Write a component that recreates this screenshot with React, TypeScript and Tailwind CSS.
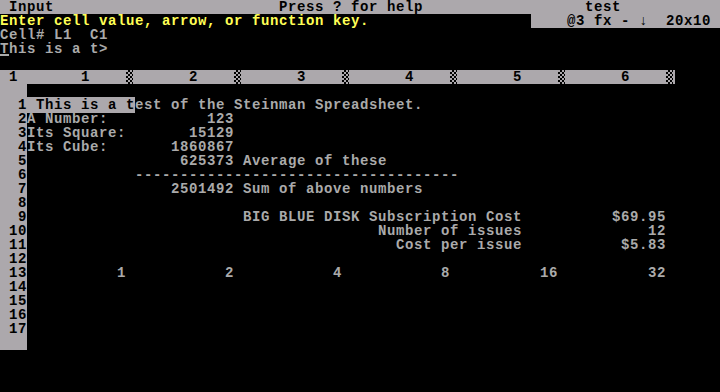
import React from 'react';

const GRAY = 'bg-[#aca8ac]';

// build a text-mode line: items are [column, text], columns are absolute screen columns
const place = (items: [number, string][], start = 3): string => {
  let out = '';
  items.forEach(([col, text]) => {
    const rel = col - start;
    if (out.length < rel) out += ' '.repeat(rel - out.length);
    out += text;
  });
  return out;
};

const right = (endCol: number, text: string): [number, string] => [endCol - text.length + 1, text];

const rows: string[] = [
  '',
  place([[3, 'A Number:'], right(25, '123')]),
  place([[3, 'Its Square:'], right(25, '15129')]),
  place([[3, 'Its Cube:'], right(25, '1860867')]),
  place([right(25, '625373'), [27, 'Average of these']]),
  place([[15, '-'.repeat(36)]]),
  place([right(25, '2501492'), [27, 'Sum of above numbers']]),
  '',
  place([[27, 'BIG BLUE DISK Subscription Cost'], right(73, '$69.95')]),
  place([right(57, 'Number of issues'), right(73, '12')]),
  place([right(57, 'Cost per issue'), right(73, '$5.83')]),
  '',
  place([right(13, '1'), right(25, '2'), right(37, '4'), right(49, '8'), right(61, '16'), right(73, '32')]),
  '',
  '',
  '',
  '',
];

const Hatch = () => (
  <div className="w-[9px] h-[14px] flex">
    <div className="w-[7px] h-[14px] bg-[repeating-conic-gradient(#000_0_25%,#aca8ac_0_50%)] bg-[length:4px_4px]" />
  </div>
);

const HeaderRow = () => (
  <div className={`flex w-[675px] h-[14px] ${GRAY} text-black`}>
    <div className="w-[27px] whitespace-pre"> 1</div>
    {[1, 2, 3, 4, 5, 6].map((n) => (
      <div key={n} className="flex w-[108px]">
        <div className="w-[99px] whitespace-pre">{'      ' + n}</div>
        <Hatch />
      </div>
    ))}
  </div>
);

const GridRow = ({ label, children }: { label: string; children?: React.ReactNode }) => (
  <div className="flex h-[14px]">
    <div className={`w-[27px] ${GRAY} text-black text-right whitespace-pre`}>{label}</div>
    <div className="flex-1 whitespace-pre text-[#aaaaaa]">{children}</div>
  </div>
);

export default function App() {
  return (
    <div className="w-[720px] h-[392px] bg-black overflow-hidden font-['Liberation_Mono',monospace] font-bold text-[14px] tracking-[0.6px] leading-[14px]">
      {/* status line */}
      <div className={`flex h-[14px] ${GRAY} text-black whitespace-pre`}>
        <div className="w-[279px]"> Input</div>
        <div className="w-[306px]">Press ? for help</div>
        <div className="flex-1">test</div>
      </div>
      <div className="flex h-[14px] whitespace-pre">
        <div className="w-[531px] text-[#ffff55]">Enter cell value, arrow, or function key.</div>
        <div className={`flex-1 ${GRAY} text-black`}>{'    @3 fx - \u2193  20x10'}</div>
      </div>
      <div className="h-[14px] whitespace-pre text-[#aaaaaa]">Cell# L1  C1</div>
      <div className="h-[14px] whitespace-pre text-[#aaaaaa]">
        <span className="underline decoration-2 underline-offset-[1px]">T</span>his is a t&gt;
      </div>
      <div className="h-[14px]" />

      <HeaderRow />
      <GridRow label="" />
      <GridRow label="1">
        <span className={`${GRAY} text-black`}> This is a t</span>est of the Steinman Spreadsheet.
      </GridRow>
      {rows.slice(1).map((text, i) => (
        <GridRow key={i} label={String(i + 2)}>
          {text}
        </GridRow>
      ))}
      <GridRow label="" />
    </div>
  );
}
